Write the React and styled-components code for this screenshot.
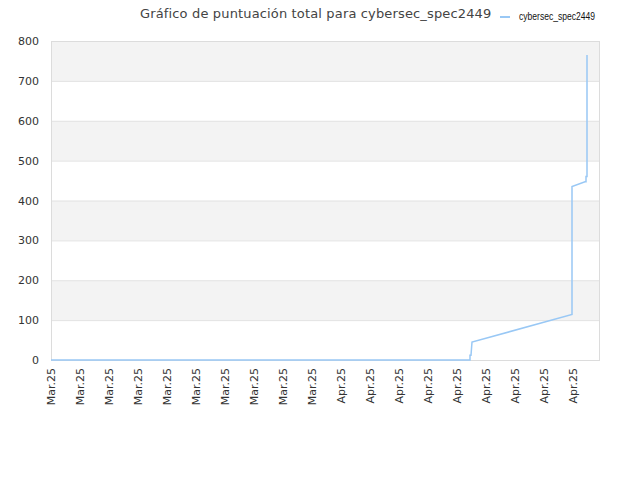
import React from "react";
import styled, { createGlobalStyle } from "styled-components";

const Global = createGlobalStyle`
  html, body { margin: 0; padding: 0; background: #fff; }
`;

const Frame = styled.div`
  width: 640px;
  height: 480px;
  font-family: "DejaVu Sans", sans-serif;
`;

const Chart = styled.svg`
  display: block;
  font-family: "DejaVu Sans", sans-serif;
`;

const L = 51, R = 600, T = 41, B = 360;
const y = (v) => B - (v / 800) * (B - T);

export default function App() {
  const labels = Array.from({ length: 19 }, (_, i) => ({
    x: 51 + i * 29,
    t: i < 10 ? "Mar.25" : "Apr.25",
  }));
  const pts = [
    [51, 0], [470, 0], [470, 12], [471, 12], [472, 45], [572, 114], [572, 435],
    [585, 447], [586, 447], [586, 460], [587, 460], [587, 765],
  ];
  return (
    <Frame>
      <Global />
      <Chart width="640" height="480">
        {[0, 1, 2, 3, 4, 5, 6, 7].map((i) => (
          <rect key={i} x={L} y={y((i + 1) * 100)} width={R - L} height={40}
            fill={i % 2 === 1 ? "#f3f3f3" : "#ffffff"} />
        ))}
        {[0, 1, 2, 3, 4, 5, 6, 7, 8].map((i) => (
          <line key={i} x1={L} x2={R} y1={y(i * 100) + 0.5} y2={y(i * 100) + 0.5} stroke="#e2e2e2" />
        ))}
        <rect x={L + 0.5} y={T + 0.5} width={R - L - 1} height={B - T} fill="none" stroke="#dcdcdc" />
        {[0, 1, 2, 3, 4, 5, 6, 7, 8].map((i) => (
          <text key={i} x={39} y={y(i * 100) + 4} textAnchor="end" fontSize="11" fill="#333">{i * 100}</text>
        ))}
        {labels.map((l, i) => (
          <text key={i} transform={`translate(${l.x + 4},${B + 8}) rotate(-90)`} textAnchor="end"
            fontSize="11" fill="#333">{l.t}</text>
        ))}
        <polyline points={pts.map(([px, v]) => `${px},${y(v)}`).join(" ")}
          fill="none" stroke="#99c8f5" strokeWidth="1.5" />
        <text x={140} y={18} fontSize="13" fill="#444" letterSpacing="0.15">Gráfico de puntuación total para cybersec_spec2449</text>
        <rect x={496} y={4} width={144} height={22} fill="#fff" />
        <line x1={500} x2={510} y1={17} y2={17} stroke="#99c8f5" strokeWidth="2" />
        <text x={519} y={20} fontSize="11" fill="#111" fontFamily="Liberation Sans, sans-serif" textLength="76" lengthAdjust="spacingAndGlyphs">cybersec_spec2449</text>
      </Chart>
    </Frame>
  );
}
